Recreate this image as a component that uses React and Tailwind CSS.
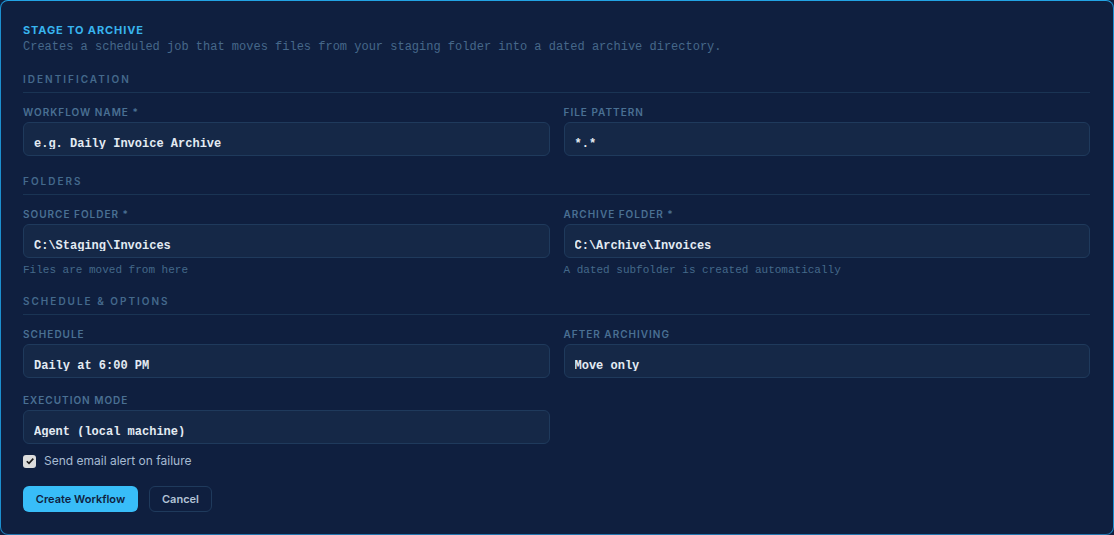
import React from "react";

const sans = { fontFamily: "Inter, 'Noto Sans', sans-serif" };

function SectionHeading({ children }) {
  return (
    <div className="border-b border-[#1a3454] pb-[6px]">
      <div
        className="text-[10px] leading-[14px] font-semibold uppercase tracking-[0.2em] text-[#44698c]"
        style={sans}
      >
        {children}
      </div>
    </div>
  );
}

function Field({ label, value, hint }) {
  return (
    <div className="flex flex-col">
      <div
        className="text-[10px] leading-[14px] font-semibold uppercase tracking-[0.1em] text-[#4a7093] mb-[3px]"
        style={sans}
      >
        {label}
      </div>
      <div className="h-[34px] rounded-md border border-[#1f3a5c] bg-[#152847] px-[10px] overflow-hidden">
        <div
          className="h-[26px] overflow-hidden pt-[15px] text-[12px] leading-[12px] font-bold text-[#e3ebf3] whitespace-pre"
          style={{ fontFamily: "'Liberation Mono', 'DejaVu Sans Mono', monospace" }}
        >
          {value}
        </div>
      </div>
      {hint && (
        <div
          className="mt-[5px] text-[11px] leading-[14px] text-[#44698a]"
          style={{ fontFamily: "'Liberation Mono', monospace" }}
        >
          {hint}
        </div>
      )}
    </div>
  );
}

export default function App() {
  return (
    <div className="w-[1114px] h-[535px] bg-[#0f1f3f]">
      <div className="h-[535px] rounded-lg border border-[#1c8fcf] border-t-[#22a3e4] border-b-[#2474ad] bg-[#0f1f3f] pt-[22px] pl-[22px] pr-[23px]">
        <div
          className="text-[11px] leading-[14px] font-bold uppercase tracking-[0.08em] text-[#38b4ee]"
          style={sans}
        >
          Stage to Archive
        </div>
        <div
          className="mt-[2px] text-[12px] leading-[16px] text-[#46688a]"
          style={{ fontFamily: "'Liberation Mono', monospace" }}
        >
          Creates a scheduled job that moves files from your staging folder into a dated archive directory.
        </div>

        <div className="mt-[17px]">
          <SectionHeading>Identification</SectionHeading>
          <div className="mt-[12px] grid grid-cols-2 gap-x-[14px]">
            <Field label="Workflow Name *" value="e.g. Daily Invoice Archive" />
            <Field label="File Pattern" value="*.*" />
          </div>
        </div>

        <div className="mt-[18px]">
          <SectionHeading>Folders</SectionHeading>
          <div className="mt-[12px] grid grid-cols-2 gap-x-[14px]">
            <Field
              label="Source Folder *"
              value={"C:\\Staging\\Invoices"}
              hint="Files are moved from here"
            />
            <Field
              label="Archive Folder *"
              value={"C:\\Archive\\Invoices"}
              hint="A dated subfolder is created automatically"
            />
          </div>
        </div>

        <div className="mt-[17px]">
          <SectionHeading>Schedule &amp; Options</SectionHeading>
          <div className="mt-[12px] grid grid-cols-2 gap-x-[14px] gap-y-[15px]">
            <Field label="Schedule" value="Daily at 6:00 PM" />
            <Field label="After Archiving" value="Move only" />
            <Field label="Execution Mode" value="Agent (local machine)" />
          </div>
        </div>

        <div className="mt-[10px] flex items-center gap-[8px]">
          <div className="w-[13px] h-[13px] rounded-[3px] bg-[#dcdcdc] flex items-center justify-center">
            <svg width="10" height="10" viewBox="0 0 10 10">
              <path d="M1.8 5.2 L4 7.4 L8.3 2.6" fill="none" stroke="#1a1a1a" strokeWidth="1.6" />
            </svg>
          </div>
          <span className="text-[12px] leading-[14px] text-[#a7bbd2]" style={sans}>
            Send email alert on failure
          </span>
        </div>

        <div className="mt-[18px] flex gap-[11px]">
          <button
            className="h-[26px] w-[115px] rounded-md bg-[#38bdf8] text-[11px] font-semibold text-[#0f1f3f]"
            style={sans}
          >
            Create Workflow
          </button>
          <button
            className="h-[26px] w-[63px] rounded-md border border-[#1f3a5c] text-[11px] font-semibold text-[#b3c3d6]"
            style={sans}
          >
            Cancel
          </button>
        </div>
      </div>
    </div>
  );
}
